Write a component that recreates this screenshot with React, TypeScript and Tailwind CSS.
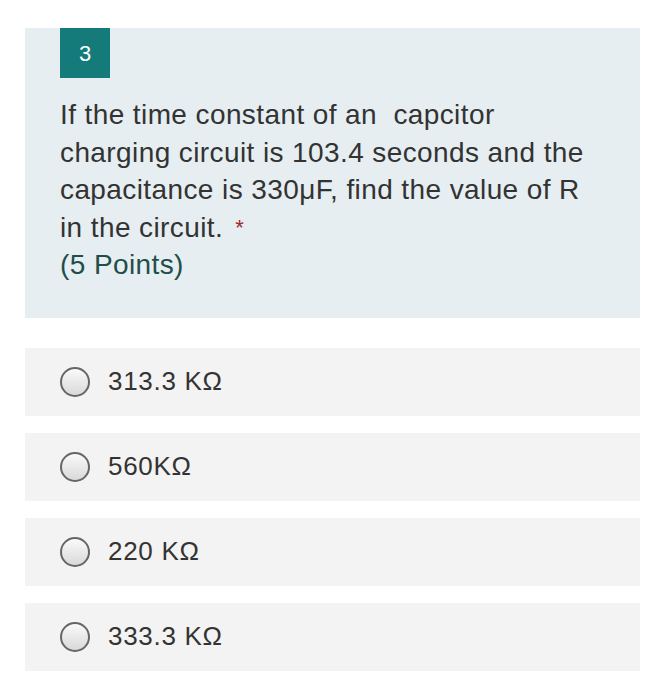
import React from "react";

const options = ["313.3 KΩ", "560KΩ", "220 KΩ", "333.3 KΩ"];

const Radio = () => (
  <span className="block h-[30px] w-[30px] shrink-0 rounded-full border-2 border-[#666] bg-gradient-to-b from-[#fafafa] to-[#d9d9d9]" />
);

export default function App() {
  return (
    <div
      className="min-h-[700px] bg-white pt-[28px] pl-[25px] pr-[26px] text-[#333]"
      style={{ fontFamily: '"Liberation Sans", Arial, sans-serif' }}
    >
      <div className="bg-[#e6eef1] pl-[35px] pr-6 pb-[34px]">
        <div className="flex h-[50px] w-[50px] items-center justify-center bg-[#147a7a] text-[22px] text-white">
          3
        </div>
        <div className="mt-[18px] whitespace-nowrap text-[28px] leading-[37.5px] tracking-[0.4px]">
          <p>
            If the time constant of an&nbsp; capcitor
            <br />
            charging circuit is 103.4 seconds and the
            <br />
            capacitance is 330μF, find the value of R
            <br />
            in the circuit.
            <span className="ml-3 align-top text-[22px] text-[#a4262c]">*</span>
          </p>
          <p className="text-[#1f4f4b]">(5 Points)</p>
        </div>
      </div>
      <div className="mt-[30px] flex flex-col gap-[17px]">
        {options.map((o) => (
          <div key={o} className="flex h-[68px] items-center gap-[18px] bg-[#f3f3f3] pl-[35px]">
            <Radio />
            <span className="text-[26px] tracking-[0.7px]">{o}</span>
          </div>
        ))}
      </div>
    </div>
  );
}
